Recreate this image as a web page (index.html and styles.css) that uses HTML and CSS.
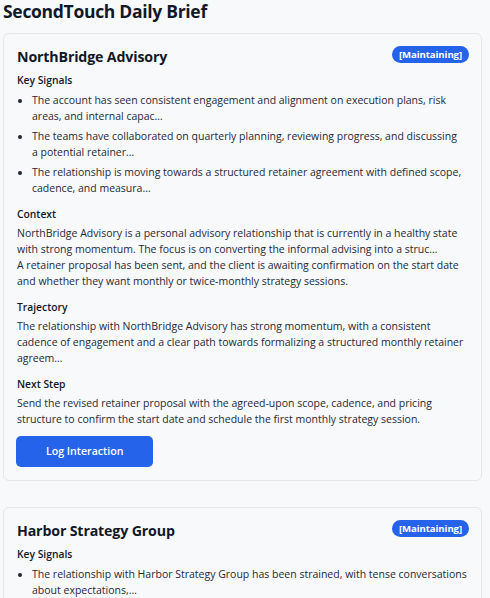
FILE: index.html
```html
<!DOCTYPE html>
<html lang="en">
<head>
<meta charset="utf-8">
<title>SecondTouch Daily Brief</title>
<link rel="stylesheet" href="styles.css">
</head>
<body>
<h1 class="page-title">SecondTouch Daily Brief</h1>
<div class="feed">
  <article class="card">
    <header class="card-head">
      <h2 class="card-title">NorthBridge Advisory</h2>
      <span class="badge">[Maintaining]</span>
    </header>
    <section class="block">
      <h3 class="label">Key Signals</h3>
      <ul class="signals">
        <li>The account has seen consistent engagement and alignment on execution plans, risk areas, and internal capac…</li>
        <li>The teams have collaborated on quarterly planning, reviewing progress, and discussing a&nbsp;potential retainer…</li>
        <li>The relationship is moving towards a structured retainer agreement with defined scope, cadence, and measura…</li>
      </ul>
    </section>
    <section class="block">
      <h3 class="label">Context</h3>
      <p class="text">NorthBridge Advisory is a personal advisory relationship that is currently in a healthy state with strong momentum. The focus is on converting the informal advising into a struc…</p>
      <p class="text">A retainer proposal has been sent, and the client is awaiting confirmation on the start date and whether they want monthly or twice-monthly strategy sessions.</p>
    </section>
    <section class="block">
      <h3 class="label">Trajectory</h3>
      <p class="text">The relationship with NorthBridge Advisory has strong momentum, with a consistent cadence&nbsp;of engagement and a clear path towards formalizing a structured monthly retainer agreem…</p>
    </section>
    <section class="block">
      <h3 class="label">Next Step</h3>
      <p class="text">Send the revised retainer proposal with the agreed-upon scope, cadence, and pricing structure&nbsp;to confirm the start date and schedule the first monthly strategy session.</p>
    </section>
    <button class="btn" type="button">Log Interaction</button>
  </article>

  <article class="card">
    <header class="card-head">
      <h2 class="card-title">Harbor Strategy Group</h2>
      <span class="badge">[Maintaining]</span>
    </header>
    <section class="block">
      <h3 class="label">Key Signals</h3>
      <ul class="signals">
        <li>The relationship with Harbor Strategy Group has been strained, with tense conversations about expectations,…</li>
        <li>Recent check-ins have focused on clarifying deliverables and rebuilding trust with the leadership team…</li>
      </ul>
    </section>
    <section class="block">
      <h3 class="label">Context</h3>
      <p class="text">Harbor Strategy Group is a consulting relationship that needs attention to reset expectations and agree on a clear scope.</p>
    </section>
    <button class="btn" type="button">Log Interaction</button>
  </article>
</div>
</body>
</html>
```

FILE: styles.css
```css
* {
  box-sizing: border-box;
}

html {
  background: #f8f9fb;
}

body {
  margin: 0;
  padding: 0 8px 24px 3px;
  background: #f8f9fb;
  color: #1f2937;
  font-family: "Open Sans", "Noto Sans", sans-serif;
  font-size: 10.5px;
  line-height: 16px;
}

.page-title {
  margin: 0 0 11px;
  font-size: 17.5px;
  line-height: 22px;
  letter-spacing: -0.3px;
  font-weight: 700;
  color: #111827;
}

.feed {
  display: flex;
  flex-direction: column;
  gap: 26px;
}

.card {
  display: flex;
  flex-direction: column;
  align-items: flex-start;
  gap: 10px;
  padding: 13px;
  border: 1px solid #e5e7eb;
  border-radius: 6px;
  background: #f8f9fb;
}

.card-head {
  align-self: stretch;
  display: flex;
  align-items: center;
  justify-content: space-between;
  height: 20px;
  margin-bottom: -5px;
}

.card-title {
  margin: 0;
  font-size: 14.2px;
  line-height: 20px;
  letter-spacing: -0.15px;
  font-weight: 700;
  color: #111827;
}

.badge {
  display: inline-block;
  height: 17px;
  padding: 0 7px;
  border-radius: 999px;
  background: #2563eb;
  color: #ffffff;
  font-size: 9.6px;
  line-height: 17px;
  letter-spacing: -0.1px;
  font-weight: 700;
  margin-top: -5px;
  margin-right: -1px;
}

.block {
  align-self: stretch;
}

.label {
  margin: 0 0 3px;
  font-size: 10.3px;
  line-height: 16px;
  font-weight: 600;
  color: #111827;
}

.signals {
  margin: 4px 0 0;
  padding: 0 0 0 15px;
  list-style: disc;
}

.signals li + li {
  margin-top: 4px;
}

.text {
  margin: 0;
}

.btn {
  height: 31px;
  margin-top: -1px;
  padding: 0 30px;
  border: 0;
  border-radius: 5px;
  background: #2563eb;
  color: #ffffff;
  font-family: inherit;
  font-size: 10.6px;
  font-weight: 600;
  line-height: 31px;
  margin-left: -1px;
}
```
